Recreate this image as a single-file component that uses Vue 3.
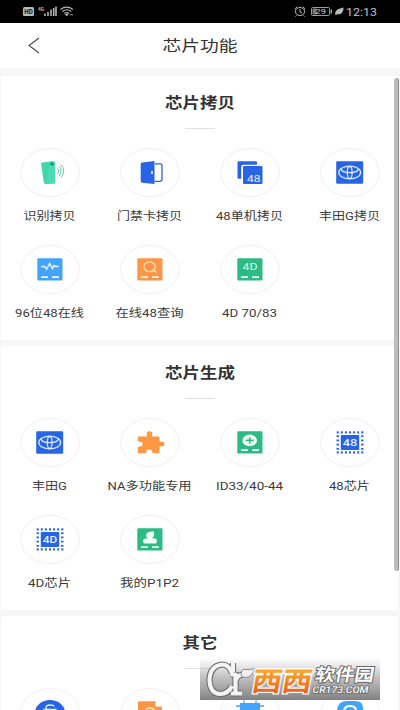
<script setup>
const sections = [
  {
    title: '芯片拷贝', width: 70,
    items: [
      { icon: 'fob', label: '识别拷贝', width: 52 },
      { icon: 'door', label: '门禁卡拷贝', width: 65 },
      { icon: 'copy', label: '48单机拷贝', width: 67 },
      { icon: 'toyota', label: '丰田G拷贝', width: 61 },
      { icon: 'wave', label: '96位48在线', width: 69 },
      { icon: 'search', label: '在线48查询', width: 68 },
      { icon: 'fourd', label: '4D 70/83', width: 55 }
    ]
  },
  {
    title: '芯片生成', width: 70,
    items: [
      { icon: 'toyota', label: '丰田G', width: 35 },
      { icon: 'puzzle', label: 'NA多功能专用', width: 84 },
      { icon: 'plus', label: 'ID33/40-44', width: 67 },
      { icon: 'chip', text: '48', label: '48芯片', width: 41 },
      { icon: 'chip', text: '4D', label: '4D芯片', width: 43 },
      { icon: 'person', label: '我的P1P2', width: 59 }
    ]
  },
  {
    title: '其它', width: 35,
    items: [
      { icon: 'lock', label: '', width: 0 },
      { icon: 'file', label: '', width: 0 },
      { icon: 'board', label: '', width: 0 },
      { icon: 'round', label: '', width: 0 }
    ]
  }
]
const tileColors = { wave: '#43a3fb', search: '#fb9646', fourd: '#2dba85', plus: '#2dba85', person: '#2dba85' }
const chipPins = [17.7, 21.8, 25.9, 30, 34.1, 38.2, 42.3]
const chipRows = [18.2, 22.4, 26.6, 30.8]
</script>

<template>
  <div class="screen">
    <div class="status">
      <svg class="status-left" width="60" height="22" viewBox="0 0 60 22">
        <rect x="3" y="7" width="11" height="9" rx="1.5" fill="#b9b9b9" />
        <text x="4.3" y="14" font-size="6.5" font-weight="700" textLength="8.5" lengthAdjust="spacingAndGlyphs" fill="#111">HD</text>
        <text x="18" y="10.5" font-size="5.5" font-weight="700" textLength="6" lengthAdjust="spacingAndGlyphs" fill="#bbb">4G</text>
        <path d="M25 16v-2.5M28 16v-4M31 16V9.500M33.700 16V8M36 16V6.500" stroke="#b5b5b5" stroke-width="1.600" />
        <path d="M40.500 9.500Q46.500 4.800 53 9.500M42.300 11.500Q46.800 8 51.300 11.500M44.300 13.500Q46.800 11.500 49 13.500" fill="none" stroke="#b5b5b5" stroke-width="1.100" />
        <path d="M45.500 14h2.500l-1.200 2zM49.500 14.800h3.500" fill="#bbb" stroke="#bbb" stroke-width=".8" />
      </svg>
      <svg class="status-right" width="90" height="22" viewBox="290 0 90 22">
        <ellipse cx="300" cy="11.500" rx="4.600" ry="4" fill="none" stroke="#bbb" />
        <path d="M300 9v3l2 1M294.800 9l2.500-2.400M305.200 9l-2.500-2.400M296.500 15.500l-1 1M303.500 15.500l1 1" fill="none" stroke="#bbb" />
        <rect x="311.500" y="7.500" width="18" height="8" rx="1" fill="none" stroke="#9b9b9b" />
        <rect x="312.500" y="8.500" width="4" height="6" fill="#777" />
        <path d="M331.300 9.500v4" stroke="#aaa" stroke-width="1.400" />
        <text x="315" y="14.400" font-size="7.500" textLength="11" lengthAdjust="spacingAndGlyphs" fill="#ccc">29</text>
        <path d="M335.500 15.500C334 10 339 8.500 343.500 7.500C343.500 12.500 341 15 337 14.200z" fill="#bbb" />
        <text x="346" y="15.500" font-size="11.500" textLength="31" lengthAdjust="spacingAndGlyphs" fill="#c4c4c4">12:13</text>
      </svg>
    </div>

    <header class="nav">
      <svg class="back" width="14" height="18" viewBox="0 0 14 18"><path d="M12 1L2 8.500l10 7.500" fill="none" stroke="#444" stroke-width="1.100" /></svg>
      <svg class="nav-title" width="90" height="24"><text x="45" y="17" text-anchor="middle" font-size="15" textLength="75" lengthAdjust="spacingAndGlyphs" fill="#333">芯片功能</text></svg>
    </header>

    <main class="content">
      <section v-for="section in sections" :key="section.title" class="card">
        <svg class="title" width="100" height="24">
          <text x="50" y="17.300" text-anchor="middle" font-size="14.500" font-weight="700" :textLength="section.width" lengthAdjust="spacingAndGlyphs" fill="#333">{{ section.title }}</text>
        </svg>
        <div class="rule"></div>
        <div class="grid">
          <div v-for="(item, i) in section.items" :key="i" class="cell">
            <svg class="icon" width="60" height="49" viewBox="0 0 60 49">
              <ellipse cx="30" cy="24.500" rx="29.300" ry="24" fill="#fff" stroke="#f0f0f0" />

              <g v-if="item.icon === 'fob'">
                <path d="M21 14.800L32 13.200Q35 13 35 15V34.500Q35 35.500 33.500 35.600L25.500 36Q24 36 23.700 34z" fill="#43d7ac" />
                <path d="M30 13.500L32 13.200Q35 13 35 15V34.500Q35 35.500 33.500 35.600L26.500 36z" fill="#4adbb3" />
                <ellipse cx="32" cy="16" rx="1.800" ry="1.500" fill="#168d70" />
                <path d="M37.500 20.500Q40 23 37.500 26M39.200 18.500Q43 22.500 39.200 28M41 16.800Q46.500 22.500 41 29.500" fill="none" stroke="#55cba9" stroke-width="1" />
              </g>

              <g v-else-if="item.icon === 'door'">
                <path d="M35 15.800H40.500Q42 15.800 42 17.200V31.300Q42 33.300 40 33.300H34.500" fill="none" stroke="#2865e4" stroke-width="1.300" />
                <path d="M20.700 16Q20.700 14.700 22 14.500L34.500 13V36L22 34.700Q20.700 34.500 20.700 33z" fill="#2865e4" />
                <path d="M32 23v3" stroke="#fff" stroke-width="1.600" />
              </g>

              <g v-else-if="item.icon === 'copy'">
                <path d="M18.500 13.200H36Q37 13.200 37 14.200V16.800H24Q21.200 16.800 21.200 19V30.800H18.500Q17.500 30.800 17.500 29.800V14.200Q17.500 13.200 18.500 13.200z" fill="#2865e4" />
                <rect x="23" y="18" width="19.500" height="18" rx="1" fill="#2865e4" />
                <text x="27" y="33.800" font-size="9" textLength="13.500" lengthAdjust="spacingAndGlyphs" fill="#e9efff">48</text>
              </g>

              <g v-else-if="item.icon === 'toyota'">
                <rect x="16.200" y="13.200" width="27" height="22.500" rx="1.300" fill="#2865e4" />
                <g fill="none" stroke="#d9e8ff" stroke-width="1.300">
                  <ellipse cx="29.700" cy="24.500" rx="10.900" ry="6.300" />
                  <path d="M21 20.300Q21.500 24.600 29.700 24.600Q38 24.600 38.500 20.300" />
                  <ellipse cx="29.700" cy="24.500" rx="2.400" ry="6" />
                </g>
              </g>

              <g v-else-if="tileColors[item.icon]">
                <rect x="17.300" y="13.200" width="25.200" height="22.400" rx="1.300" :fill="tileColors[item.icon]" />
                <path d="M21 32.200h7M32 32.200h7" stroke="#fff" stroke-width="1.700" opacity=".9" />
                <path v-if="item.icon === 'wave'" d="M21 21.500h3.700l2 2.700 3-5.700 2.700 5.200 1.700-3.200 1.200 1h3.500" fill="none" stroke="#e4f5ff" stroke-width="1.500" />
                <g v-else-if="item.icon === 'search'" fill="none" stroke="#ffe1bd" stroke-width="1.300">
                  <ellipse cx="29.500" cy="21.700" rx="5.700" ry="4.900" /><path d="M33 25l3.500 2.500" />
                </g>
                <text v-else-if="item.icon === 'fourd'" x="22.500" y="24.700" font-size="9" textLength="15" lengthAdjust="spacingAndGlyphs" fill="#d9fff0">4D</text>
                <g v-else-if="item.icon === 'plus'">
                  <ellipse cx="29.700" cy="22.400" rx="7.300" ry="5.900" fill="#f3fff9" />
                  <path d="M25.700 22.400h8M29.700 19.200v6.400" stroke="#2dba85" stroke-width="1.600" />
                </g>
                <path v-else d="M31 16.500H34V20.500Q33.500 22.700 31.800 23.300H34.500Q37 23.500 37 26Q37 28.600 34.500 28.600H25.500Q23 28.600 23 26Q23 23.600 25.500 23.600H28Q25.700 22.500 26 20Q26.500 17 31 16.500z" fill="#eefff8" />
              </g>

              <path v-else-if="item.icon === 'puzzle'" d="M19 18.500H26.700Q27.500 18 26.800 16.500Q26 13.200 29.500 13.200Q33 13.200 32.200 16.500Q31.500 18 32.500 18.500H38.500Q39.500 18.500 39.500 19.500V23Q40 24 41.500 23.500Q44.500 23.300 44.500 26Q44.500 28.800 41.500 28.500Q40 28 39.500 29V34.200Q39.500 35.200 38.500 35.200H33Q32.200 35 32.300 33.800Q32 31.300 29.300 31.300Q26.500 31.300 26.300 34Q26.300 35.200 25.300 35.200H19Q17.800 35.200 17.800 34V29.500Q18 28.500 19.500 28.500Q22.700 28.500 22.700 26.200Q22.700 23.800 19.500 23.800Q18 23.800 17.800 22.800V19.500Q17.800 18.500 19 18.500z" fill="#ff9844" />

              <g v-else-if="item.icon === 'chip'" fill="#2865e4">
                <g v-for="x in chipPins" :key="x">
                  <rect :x="x - 1" y="13.300" width="2" height="2.200" />
                  <rect :x="x - 1" y="33.300" width="2" height="2.200" />
                </g>
                <g v-for="y in chipRows" :key="y">
                  <rect x="16.500" :y="y - .9" width="2.500" height="1.800" />
                  <rect x="41" :y="y - .9" width="2.500" height="1.800" />
                </g>
                <rect x="20.800" y="17" width="18.400" height="15" rx=".8" />
                <text x="22.800" y="27.800" font-size="8.500" font-weight="500" textLength="14.500" lengthAdjust="spacingAndGlyphs" fill="#e8f2ff">{{ item.text }}</text>
              </g>

              <g v-else-if="item.icon === 'lock'">
                <ellipse cx="30" cy="24.500" rx="15" ry="12.500" fill="#2865e4" />
                <path d="M26 23v-3Q26 17 30 17Q34 17 34 18.500M24 21.500h12v9H24z" fill="none" stroke="#e7efff" stroke-width="1.300" />
              </g>
              <g v-else-if="item.icon === 'file'">
                <path d="M19 13.200H35.500L42 19V36H18V14.200Q18 13.200 19 13.200z" fill="#fb9646" />
                <path d="M35.500 13.200V18.500H42z" fill="#fff" />
                <ellipse cx="30" cy="24" rx="5" ry="4" fill="none" stroke="#ffe4c6" stroke-width="1.500" />
              </g>
              <g v-else-if="item.icon === 'board'" fill="#43a3fb">
                <rect x="20" y="15" width="20" height="19" /><path d="M16 18h28M16 24h28M16 29h28M24 12.500v24M36 12.500v24" stroke="#43a3fb" stroke-width="1.300" />
              </g>
              <g v-else>
                <path d="M17 22Q18 13 27 13H35Q43 13 43 20V35H17z" fill="#43a3fb" />
                <path d="M24 24Q24 18 30 18Q36 18 36 23" fill="none" stroke="#fff" stroke-width="2" />
              </g>
            </svg>
            <svg class="label" width="100" height="20">
              <text v-if="item.label" x="49.500" y="14.300" text-anchor="middle" font-size="11.500" :textLength="item.width" lengthAdjust="spacingAndGlyphs" fill="#3b3b3b">{{ item.label }}</text>
            </svg>
          </div>
        </div>
      </section>
    </main>

    <div class="scrollbar"></div>

    <svg class="watermark" width="180" height="46" viewBox="0 0 180 46">
      <defs>
        <linearGradient id="shade" x1="0" y1="0" x2="0" y2="1">
          <stop offset="0" stop-color="#aaa" stop-opacity="0" /><stop offset=".45" stop-color="#999" stop-opacity=".6" /><stop offset="1" stop-color="#808080" />
        </linearGradient>
        <linearGradient id="orange" x1="0" y1="0" x2="0" y2="1">
          <stop offset="0" stop-color="#ffb32c" /><stop offset="1" stop-color="#e8521b" />
        </linearGradient>
      </defs>
      <rect y="4" width="180" height="42" fill="url(#shade)" />
      <g fill="none" stroke-linejoin="round">
        <path id="mark" d="M32 19Q29 10.500 22 10.500Q10 12 9.500 26Q10 39.500 20 40Q28 40 32 32M33 9V18M30.500 20.500H35.500V38.500M31 39.500H42M36 26Q38 20.500 43 20.500" stroke="#686868" stroke-width="6.200" />
        <path d="M32 19Q29 10.500 22 10.500Q10 12 9.500 26Q10 39.500 20 40Q28 40 32 32M33 9V18M30.500 20.500H35.500V38.500M31 39.500H42M36 26Q38 20.500 43 20.500" stroke="#f4f4f4" stroke-width="4.200" />
      </g>
      <path d="M41 21Q41 14 46 15.500Q50 16 55 14.500Q52 23 46 23.500Q42 23.500 41 21z" fill="#f0f0f0" stroke="#777" stroke-width=".8" />
      <g transform="skewX(-10)" font-weight="700">
        <text x="57" y="37" font-size="27" textLength="60" lengthAdjust="spacingAndGlyphs" fill="url(#orange)" stroke="#fff" stroke-width="2.500" paint-order="stroke">西西</text>
        <text x="119" y="27" font-size="17.500" textLength="59" lengthAdjust="spacingAndGlyphs" fill="#fff" stroke="#666" stroke-width="1.800" paint-order="stroke">软件园</text>
        <text x="119" y="39.500" font-size="9.500" font-weight="500" textLength="56" lengthAdjust="spacingAndGlyphs" fill="#fff" stroke="#666" stroke-width="1.600" paint-order="stroke">CR173.COM</text>
      </g>
    </svg>
  </div>
</template>

<style>
body { margin: 0; overflow: hidden; }
</style>

<style scoped>
.screen { position: relative; width: 400px; height: 710px; overflow: hidden; background: #f7f7f7; font-family: Roboto, "Noto Sans CJK SC", sans-serif; }
svg { display: block; flex: none; }
.status { display: flex; justify-content: space-between; height: 23px; padding: 0 20px; background: #000; }
.nav { display: grid; grid-template-columns: 1fr auto 1fr; align-items: center; height: 45px; background: #fff; }
.back { margin-left: 27px; }
.content { display: flex; flex-direction: column; gap: 6px; padding: 8px 2px 0 1px; }
.card { display: flex; flex-direction: column; align-items: center; flex: none; box-sizing: border-box; height: 264px; padding-top: 15px; background: #fff; border-radius: 2px; }
.title { margin-left: 1px; }
.rule { width: 30px; height: 1px; margin: 13px 0 19px 1px; background: #e0e0e0; }
.grid { display: grid; grid-template-columns: repeat(4, 100px); row-gap: 19px; margin-left: 1px; width: 400px; }
.cell { display: flex; flex-direction: column; align-items: center; gap: 9px; }
.scrollbar { position: absolute; top: 78px; right: 1px; width: 5px; height: 493px; border-radius: 3px; background: #bdbdbd; border-right: 1px solid #8f8f8f; box-sizing: border-box; }
.watermark { position: absolute; left: 200px; top: 654px; }
</style>
